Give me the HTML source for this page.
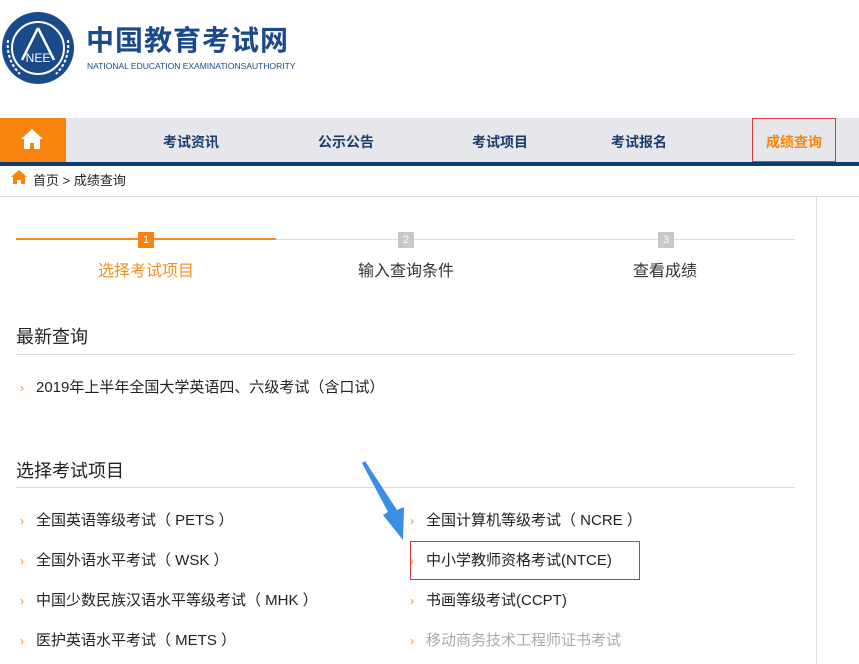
<!DOCTYPE html>
<html><head><meta charset="utf-8"><style>
body{margin:0;width:859px;height:664px;overflow:hidden;background:#fff;font-family:"Liberation Sans","Noto Sans CJK SC",sans-serif;position:relative}
.a{position:absolute;white-space:nowrap}
.nav{position:absolute;left:0;top:118px;width:859px;height:44px;background:#e6e7eb;border-bottom:4px solid #0d3c74}
.nv{position:absolute;top:14px;font-size:14px;font-weight:bold;color:#1a3d6e}
.chev{color:#f39020;font-size:12px;display:inline-block;width:16px}
.it{font-size:15px;color:#222}
</style></head><body>
<svg class="a" style="left:0;top:10px" width="80" height="80" viewBox="0 0 80 80">
<circle cx="38" cy="38" r="36" fill="#1a4a8a"/><circle cx="38" cy="38" r="26" fill="none" stroke="#fff" stroke-width="2"/>
<path d="M38 18 L22 50 M38 18 L54 50" stroke="#fff" stroke-width="2.5" fill="none"/>
<text x="38" y="52" font-size="12" fill="#fff" text-anchor="middle" font-family="Liberation Sans">NEE</text>
<path d="M8 30 Q6 50 20 64 M68 30 Q70 50 56 64" stroke="#fff" stroke-width="2" fill="none" stroke-dasharray="3 2"/>
</svg>
<div class="a" style="left:86px;top:22px;font-size:28px;font-weight:bold;color:#1a4a8a;letter-spacing:1px;line-height:38px">中国教育考试网</div>
<div class="a" style="left:87px;top:61px;font-size:8.5px;color:#1a4a8a">NATIONAL EDUCATION EXAMINATIONSAUTHORITY</div>
<div class="nav">
<div class="a" style="left:0;top:0;width:66px;height:44px;background:#f8840d"></div>
<svg class="a" style="left:20px;top:10px" width="24" height="22" viewBox="0 0 24 22"><path d="M12 1 L1 11 L4 11 L4 21 L10 21 L10 15 L14 15 L14 21 L20 21 L20 11 L23 11 Z" fill="#fff"/></svg>
<div class="nv" style="left:163px">考试资讯</div>
<div class="nv" style="left:318px">公示公告</div>
<div class="nv" style="left:472px">考试项目</div>
<div class="nv" style="left:611px">考试报名</div>
<div class="a" style="left:752px;top:0;width:84px;height:44px;border:1px solid #e03a3a;box-sizing:border-box"></div>
<div class="nv" style="left:766px;color:#f8840d">成绩查询</div>
</div>
<svg class="a" style="left:11px;top:170px" width="16" height="14" viewBox="0 0 16 14"><path d="M8 0 L0 7 L2 7 L2 14 L6 14 L6 10 L10 10 L10 14 L14 14 L14 7 L16 7 Z" fill="#f8840d"/></svg>
<div class="a" style="left:33px;top:170px;font-size:13px;color:#222">首页 &gt; 成绩查询</div>
<div class="a" style="left:0;top:196px;width:859px;height:1px;background:#ddd"></div>
<div class="a" style="left:816px;top:196px;width:1px;height:468px;background:#ddd"></div>
<div class="a" style="left:16px;top:239px;width:779px;height:1px;background:#ddd"></div>
<div class="a" style="left:16px;top:238px;width:260px;height:2px;background:#f39020"></div>
<div class="a" style="left:138px;top:232px;width:16px;height:16px;background:#f8840d;color:#fff;font-size:11px;text-align:center;line-height:16px">1</div>
<div class="a" style="left:398px;top:232px;width:16px;height:16px;background:#c8c8c8;color:#fff;font-size:11px;text-align:center;line-height:16px">2</div>
<div class="a" style="left:658px;top:232px;width:16px;height:16px;background:#c8c8c8;color:#fff;font-size:11px;text-align:center;line-height:16px">3</div>
<div class="a" style="left:98px;top:257px;font-size:16px;color:#f39020">选择考试项目</div>
<div class="a" style="left:358px;top:257px;font-size:16px;color:#333">输入查询条件</div>
<div class="a" style="left:633px;top:257px;font-size:16px;color:#333">查看成绩</div>
<div class="a" style="left:16px;top:323px;font-size:18px;color:#222">最新查询</div>
<div class="a" style="left:16px;top:354px;width:779px;height:1px;background:#ddd"></div>
<div class="a it" style="left:20px;top:376px"><span class="chev">›</span>2019年上半年全国大学英语四、六级考试（含口试）</div>
<div class="a" style="left:16px;top:457px;font-size:18px;color:#222">选择考试项目</div>
<div class="a" style="left:16px;top:487px;width:779px;height:1px;background:#ddd"></div>
<div class="a it" style="left:20px;top:509px"><span class="chev">›</span>全国英语等级考试（ PETS ）</div>
<div class="a it" style="left:20px;top:549px"><span class="chev">›</span>全国外语水平考试（ WSK ）</div>
<div class="a it" style="left:20px;top:589px"><span class="chev">›</span>中国少数民族汉语水平等级考试（ MHK ）</div>
<div class="a it" style="left:20px;top:629px"><span class="chev">›</span>医护英语水平考试（ METS ）</div>
<div class="a it" style="left:410px;top:509px"><span class="chev">›</span>全国计算机等级考试（ NCRE ）</div>
<div class="a it" style="left:410px;top:549px"><span class="chev">›</span>中小学教师资格考试(NTCE)</div>
<div class="a it" style="left:410px;top:589px"><span class="chev">›</span>书画等级考试(CCPT)</div>
<div class="a it" style="left:410px;top:629px;color:#aaa"><span class="chev">›</span>移动商务技术工程师证书考试</div>
<div class="a" style="left:410px;top:541px;width:230px;height:39px;border:1px solid #d9363e;box-sizing:border-box"></div>
<svg class="a" style="left:355px;top:460px" width="55" height="85" viewBox="0 0 55 85"><path d="M7 3 L33 52 L28 55 L48 80 L49 47 L42 50 L10 1 Z" fill="#3a8ee6"/></svg>
</body></html>
